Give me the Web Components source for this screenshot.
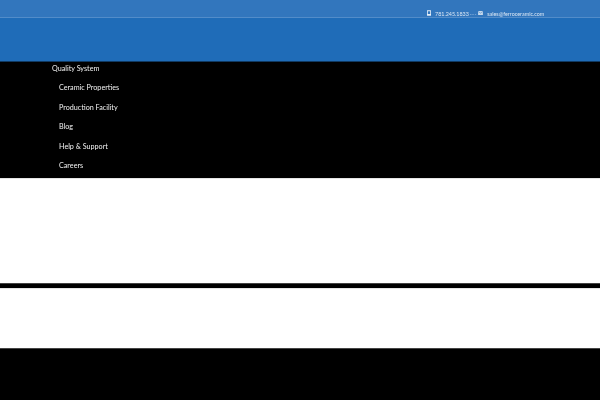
<!DOCTYPE html>
<html>
<head>
<meta charset="utf-8">
<style>
  html, body { margin: 0; padding: 0; background: #fff; }
  body { width: 600px; height: 400px; overflow: hidden; font-family: Lato, "Open Sans", sans-serif; }
</style>
</head>
<body>
<site-header phone="781.245.1833" email="sales@ferroceramic.com"></site-header>
<site-nav>
  <nav-item top>Quality System</nav-item>
  <nav-item>Ceramic Properties</nav-item>
  <nav-item>Production Facility</nav-item>
  <nav-item>Blog</nav-item>
  <nav-item>Help &amp; Support</nav-item>
  <nav-item>Careers</nav-item>
</site-nav>
<page-band h="105"></page-band>
<page-band h="5" dark></page-band>
<page-band h="60"></page-band>
<page-band h="52" dark></page-band>

<script>
  // top blue header with the contact strip
  class SiteHeader extends HTMLElement {
    connectedCallback() {
      const phone = this.getAttribute("phone");
      const email = this.getAttribute("email");
      this.attachShadow({mode: "open"}).innerHTML = `
        <style>
          :host { display: block; box-sizing: border-box; height: 62px; background: #1f6cb8; border-bottom: 1px solid #103a63; }
          .strip {
            display: flex; align-items: center; justify-content: flex-end;
            height: 18px; padding-right: 56px; padding-top: 12px;
            box-sizing: border-box;
            background: #3276bd; border-bottom: 1px solid #528cc9;
            color: #dbe7f4; font-size: 5.4px; line-height: 1;
          }
          .contact { display: flex; align-items: center; will-change: transform; }
          svg { display: block; margin-top: -3px; }
          .phone { margin-left: 4px; }
          .sep { margin: 0 1.5px 0 1px; color: #a9c6e4; letter-spacing: .3px; }
          .email { margin-left: 4px; }
        </style>
        <div class="strip">
          <div class="contact">
            <svg width="4" height="6" viewBox="0 0 5 7"><path d="M.5 0h4a.5.5 0 0 1 .5.5v6a.5.5 0 0 1-.5.5h-4a.5.5 0 0 1-.5-.5v-6A.5.5 0 0 1 .5 0zM1 1.2v3.6h3V1.2z" fill="#e6eff8"/></svg>
            <span class="phone">${phone}</span>
            <span class="sep">---</span>
            <svg width="5" height="4" viewBox="0 0 6 5"><path d="M0 0h6v5H0z" fill="#c4d8ec"/><path d="M0 .5l3 2.2L6 .5" fill="none" stroke="#3276bd" stroke-width=".6"/></svg>
            <span class="email">${email}</span>
          </div>
        </div>`;
    }
  }

  // black menu panel
  class SiteNav extends HTMLElement {
    connectedCallback() {
      this.attachShadow({mode: "open"}).innerHTML = `
        <style>
          :host { display: block; height: 116px; background: #000; }
          .list { display: flex; flex-direction: column; will-change: transform; }
        </style>
        <div class="list"><slot></slot></div>`;
    }
  }

  class NavItem extends HTMLElement {
    connectedCallback() {
      this.attachShadow({mode: "open"}).innerHTML = `
        <style>
          :host { display: block; height: 19.4px; line-height: 13px; padding-left: 59px; color: #f2f2f2; font-size: 7.2px; }
          :host([top]) { padding-left: 52px; }
        </style>
        <slot></slot>`;
    }
  }

  // plain full width stripe
  class PageBand extends HTMLElement {
    connectedCallback() {
      this.attachShadow({mode: "open"}).innerHTML = `
        <style>
          :host { display: block; box-sizing: border-box; background: #fff; border-top: 1px solid #e4e4e4; }
          :host([dark]) { background: #000; border-top-color: #444; }
        </style>`;
      this.style.height = this.getAttribute("h") + "px";
    }
  }

  window.customElements.define("site-header", SiteHeader);
  window.customElements.define("site-nav", SiteNav);
  window.customElements.define("nav-item", NavItem);
  window.customElements.define("page-band", PageBand);
</script>
</body>
</html>
